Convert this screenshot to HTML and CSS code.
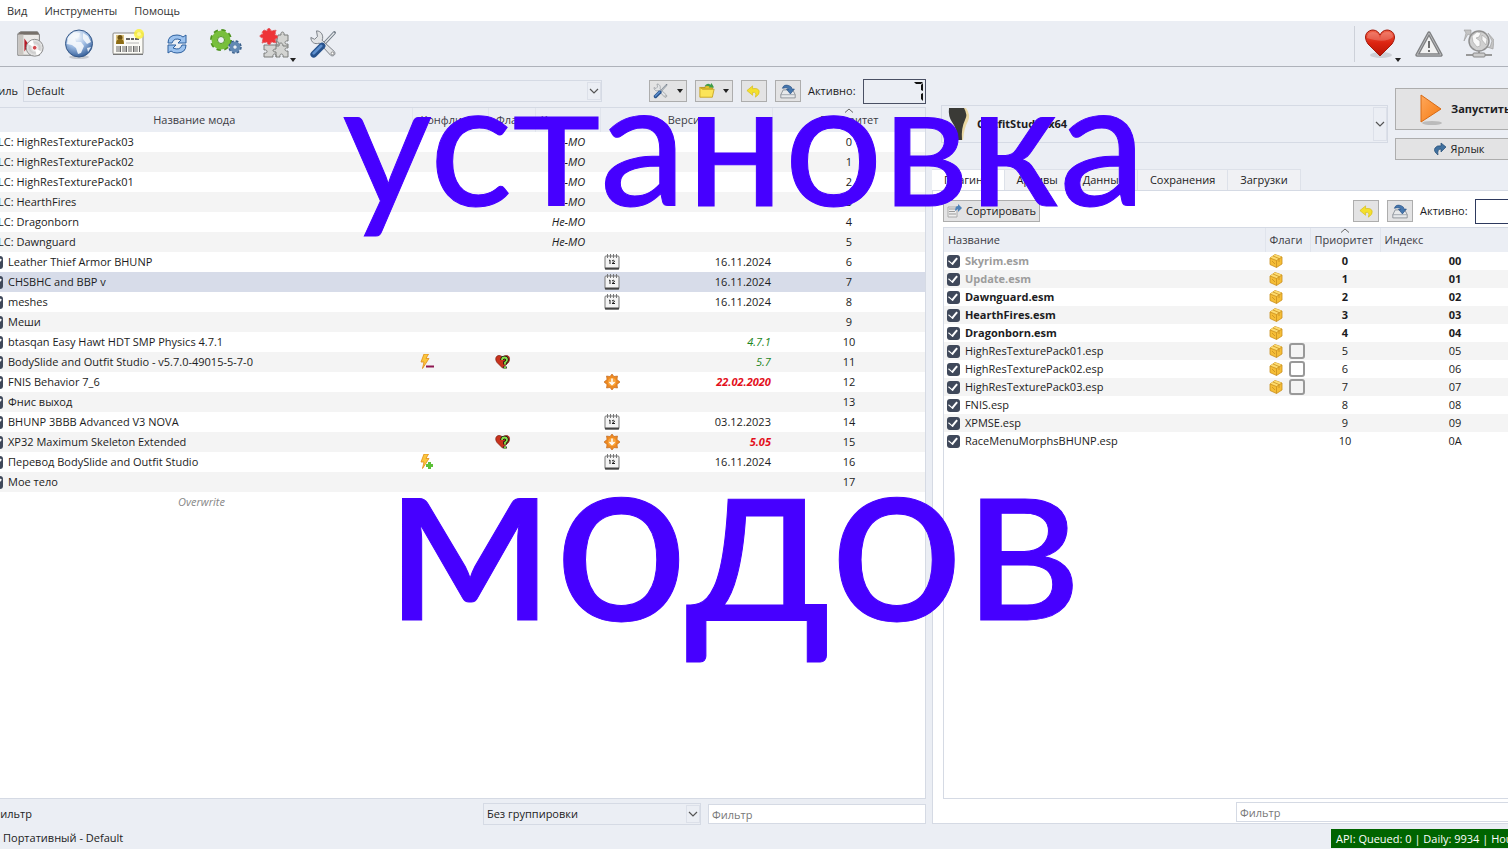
FILE: index.html
```
<!DOCTYPE html>
<html lang="ru">
<head>
  <meta charset="UTF-8">
  <meta name="viewport" content="width=device-width, initial-scale=1.0">
  <title>Mod Organizer</title>
  <link rel="stylesheet" href="styles.css">
</head>
<body>

  <!-- Shared icons -->
  <svg class="sprite" aria-hidden="true">
    <defs>
      <linearGradient id="gHeart" x1="0" y1="0" x2="0" y2="1"><stop offset="0" stop-color="#f0644c"/><stop offset="0.5" stop-color="#dc2410"/><stop offset="1" stop-color="#b81404"/></linearGradient>
      <linearGradient id="gPlay" x1="0" y1="0" x2="1" y2="1"><stop offset="0" stop-color="#ffa85c"/><stop offset="1" stop-color="#f47a10"/></linearGradient>
      <radialGradient id="gGlobe" cx="0.4" cy="0.25" r="0.8"><stop offset="0" stop-color="#fff"/><stop offset="0.5" stop-color="#9dbbe2"/><stop offset="1" stop-color="#2c5793"/></radialGradient>
      <radialGradient id="gDisc"><stop offset="0.1" stop-color="#fff"/><stop offset="0.6" stop-color="#ccc"/><stop offset="1" stop-color="#eee"/></radialGradient>
    </defs>
    <symbol id="calendar" viewBox="0 0 16 16">
      <rect x="1" y="2" width="14" height="13" rx="1" fill="#f4f4f4" stroke="#777"/>
      <path d="M1 14.500h14" stroke="#444" stroke-width="2"/>
      <path d="M3.500 0v4M6.500 0v4M9.500 0v4M12.500 0v4" stroke="#777"/>
      <path d="M5 6.500l1-.5v4M8 7q1.500-1.500 2.500 0q0 1-2.500 2.500h3" fill="none" stroke="#222"/>
    </symbol>
    <symbol id="update" viewBox="0 0 16 16">
      <path d="M8 0l2 2.500 3.500-.5-.5 3.500L16 8l-3 2.500.5 3.500-3.500-.5L8 16l-2-2.500-3.500.5.5-3.500L0 8l3-2.500L2.500 2l3.500.5z" fill="#ee8a22" stroke="#b8601a" stroke-width=".6"/>
      <circle cx="8" cy="8" r="4" fill="#f9a640"/>
      <path d="M8 4.500v6M5.500 8L8 10.500 10.500 8" fill="none" stroke="#fff" stroke-width="1.500"/>
    </symbol>
    <symbol id="endorse" viewBox="0 0 16 16">
      <path d="M7.500 14L2 8.500C-.5 5 1 1.500 4 1.500c2 0 3 1 3.500 2 .5-1 2-2 4-2 3 0 4 3.500 2 7z" fill="#c8321c" stroke="#7d1a0c" stroke-width=".7"/>
      <path d="M7 6q0-2.500 2.500-2.500T12 6q0 1.500-2 2.500v2M10 12.500v2" fill="none" stroke="#111" stroke-width="3.500"/>
      <path d="M7 6q0-2.500 2.500-2.500T12 6q0 1.500-2 2.500v2M10 12.500v2" fill="none" stroke="#8be04a" stroke-width="1.800"/>
    </symbol>
    <symbol id="bolt" viewBox="0 0 16 16">
      <path d="M5 0h4.500L7 4.500h3L3.500 14.500 5 8H2z" fill="#fbc63c" stroke="#e08c18" stroke-width=".8"/>
    </symbol>
    <symbol id="box" viewBox="0 0 14 14">
      <path d="M1 4l5-3.500 7 2.500v7l-5.500 3.500L1 10.500z" fill="#f5bd36" stroke="#c98f20" stroke-width=".8"/>
      <path d="M1 4l6.500 2.500L13 3 6 .5z" fill="#fddc70"/>
      <path d="M7.500 6.500v7M1 4l6.500 2.500L13 3M4 2l6 2.500v3.500M3 7l3 3" fill="none" stroke="#c98f20" stroke-width=".8"/>
    </symbol>
    <symbol id="tools" viewBox="0 0 32 32">
      <path d="M27 4L13 19" stroke="#6d7884" stroke-width="3.500" stroke-linecap="round"/>
      <path d="M27 4L13 19" stroke="#e4e7ea" stroke-width="1.500"/>
      <path d="M8 2l1 6-3 3-4-2c0 5 4 8 9 6l12 13c3 2 6-1 4-4L14 12c2-5-1-10-6-10z" fill="#e2e4e6" stroke="#757b82"/>
      <path d="M14 18L5 27" stroke="#27528c" stroke-width="7" stroke-linecap="round"/>
      <path d="M13 18L5 26" stroke="#5d8fce" stroke-width="3" stroke-linecap="round"/>
      <circle cx="25" cy="26" r="1.500" fill="#fff" stroke="#888"/>
    </symbol>
    <symbol id="undo" viewBox="0 0 16 16">
      <path d="M7 2L1 7l6 5V9q5-1 3 5 5-3 4-6.500T7 5z" fill="#f4e02c" stroke="#d8bf20" stroke-width=".8"/>
    </symbol>
    <symbol id="backup" viewBox="0 0 20 18">
      <path d="M4 7h12l3 6v4H1v-4z" fill="#e7e9eb" stroke="#7d848c"/>
      <path d="M1 13h18" stroke="#9299a2"/>
      <path d="M3 5Q5-1 12 2q3 1 3 4h3l-5 6-5-6h3Q9 3 3 5z" fill="#4677ae" stroke="#254f82" stroke-width=".8"/>
    </symbol>
    <symbol id="chevron" viewBox="0 0 10 6"><path d="M1 1l4 4 4-4" fill="none" stroke="#555" stroke-width="1.200"/></symbol>
    <symbol id="sort" viewBox="0 0 10 5"><path d="M1 4.500L5 1l4 3.500" fill="none" stroke="#666"/></symbol>
    <symbol id="caret" viewBox="0 0 6 4"><path d="M0 0h6L3 4z" fill="#222"/></symbol>
  </svg>

  <!-- Menu -->
  <nav class="menu">
    <a href="#">Вид</a>
    <a href="#">Инструменты</a>
    <a href="#">Помощь</a>
  </nav>

  <!-- Toolbar -->
  <header class="toolbar">
    <button class="tool" aria-label="Установить мод">
      <svg width="30" height="30" viewBox="0 0 32 32"><path d="M6 3h18l2 3v22H3V5z" fill="#eceae8" stroke="#777"/><path d="M3 6l3-3h18l2 3z" fill="#77706a"/><path d="M4 6h5v22H4z" fill="#c9c5c0"/><path d="M10 10v14l5-7z" fill="#b51c28"/><circle cx="21" cy="20" r="9" fill="url(#gDisc)" stroke="#888"/><path d="M21 20l-7-4a8 8 0 0 1 5-4zM21 20l7 4a8 8 0 0 1-5 4z" fill="#fff"/><circle cx="21" cy="20" r="2.500" fill="#d24b50" stroke="#fff"/></svg>
    </button>
    <button class="tool" aria-label="Nexus">
      <svg width="32" height="32" viewBox="0 0 32 32"><ellipse cx="16" cy="29" rx="10" ry="2" fill="#c5c9d0"/><circle cx="16" cy="15.500" r="13.500" fill="url(#gGlobe)" stroke="#345787"/><path d="M5 9l6-5 6 1-1 4-4 1 1 4 5 0 3 4-3 7-3 1-2-6-4-3-5-1zM20 5l5 3 3 6-4 2-4-5zM24 20l4-1-3 5z" fill="#f5f8fc" opacity=".9"/></svg>
    </button>
    <button class="tool" aria-label="Профили">
      <svg width="32" height="32" viewBox="0 0 32 32"><rect x="1" y="5" width="30" height="21" rx="1" fill="#fcfbf6" stroke="#8b8a86"/><path d="M1 26.500h30" stroke="#777"/><rect x="4" y="7" width="8" height="9" fill="#dbc07a"/><circle cx="8" cy="9.500" r="2.500" fill="#6e5210"/><path d="M4 16q0-5 4-5t4 5z" fill="#8c6b14"/><path d="M14 11h4M19 11h3M23 11h4" stroke="#333" stroke-width="1.500"/><path d="M14 15h13" stroke="#b8b8b8"/><path d="M5 18v6M7 18v6M8.500 18v6M11 18v6M13 18v6M14.500 18v6M17 18v6M19 18v6M21.500 18v6M23 18v6M25 18v6M27.500 18v6" stroke="#666"/><circle cx="27" cy="6" r="5" fill="#fbf03a" opacity=".85"/><circle cx="27" cy="6" r="2" fill="#fff89c"/></svg>
    </button>
    <button class="tool" aria-label="Обновить">
      <svg width="22" height="22" viewBox="0 0 22 22"><path d="M2 10q0-8 9-8 4 0 6 2l3-2v8h-8l3-3q-7-3-9 3z" fill="#9cc2ee" stroke="#2d609f"/><path d="M20 12q0 8-9 8-4 0-6-2l-3 2v-8h8l-3 3q7 3 9-3z" fill="#9cc2ee" stroke="#2d609f"/></svg>
    </button>
    <button class="tool" aria-label="Программы">
      <svg width="32" height="32" viewBox="0 0 32 32"><circle cx="11" cy="12" r="9" fill="none" stroke="#4f9420" stroke-width="4" stroke-dasharray="4 3.070"/><circle cx="11" cy="12" r="6.500" fill="none" stroke="#78bf3c" stroke-width="6"/><circle cx="11" cy="12" r="3.500" fill="#ebeef4" stroke="#4f9420"/><circle cx="25" cy="19" r="5.500" fill="none" stroke="#365c88" stroke-width="2.500" stroke-dasharray="2.500 1.820"/><circle cx="25" cy="19" r="3.500" fill="none" stroke="#6288b3" stroke-width="4"/><circle cx="25" cy="19" r="1.500" fill="#ebeef4"/></svg>
    </button>
    <button class="tool" aria-label="Инструменты">
      <svg width="32" height="32" viewBox="0 0 32 32"><path d="M19 7h3c-1-4 4-4 3 0h4v6c-4-1-4 4 0 3v4c-4-1-4 4 0 3v6h-5c1-4-4-4-3 0h-4c1-4-4-4-3 0H5v-4c4 1 4-4 0-3v-5h12z" fill="#d3d4d2" stroke="#7b7d7b"/><path d="M17 8v6c4-1 4 3 0 3v4c-4 0-4 3 0 3v5M17 18h3c0-4 4-4 4 0h5" fill="none" stroke="#7b7d7b"/><path d="M5 2l3 1c0-4 4-3 4 0l5-1-1 5c4 0 3 4 0 4l1 4-5-1c0 4-4 3-4 0l-5 1 1-5c-4 0-4-4 0-4L3 4z" fill="#ee3438" stroke="#e36468" stroke-dasharray="2 1"/></svg>
      <svg class="drop" width="6" height="4"><use href="#caret"/></svg>
    </button>
    <button class="tool" aria-label="Настройки">
      <svg width="30" height="30"><use href="#tools"/></svg>
    </button>
    <span class="spacer"></span>
    <span class="divider"></span>
    <button class="tool" aria-label="Поддержать">
      <svg width="32" height="32" viewBox="0 0 32 32"><ellipse cx="17" cy="27" rx="11" ry="3" fill="#cdd0d6"/><path d="M16 28L4 16C-2 7 4 2 9 2c4 0 6 3 7 5 1-2 3-5 7-5 5 0 11 5 5 14z" fill="url(#gHeart)" stroke="#a31a0c"/><path d="M3 10q0-6 6-6t7 6q1-6 7-6t6 5q-8 7-26 1z" fill="#fff" opacity=".2"/></svg>
      <svg class="drop" width="6" height="4"><use href="#caret"/></svg>
    </button>
    <button class="tool" aria-label="Уведомления">
      <svg width="30" height="30" viewBox="0 0 30 30"><path d="M15 4L27 26H3z" fill="#f1f1f1" stroke="#7f8082" stroke-width="3.500" stroke-linejoin="round"/><path d="M15 4L27 26H3z" fill="none" stroke="#b9babc" stroke-linejoin="round"/><path d="M15 12v7M15 21v2" stroke="#444" stroke-width="1.500"/></svg>
    </button>
    <button class="tool" aria-label="Обновление">
      <svg width="32" height="32" viewBox="0 0 32 32"><path d="M9 2H2l2 3-2 8 4-7 3 2zM26 5l4 8-2 6-3 0 6 2 1-9z" fill="#c4c4c4" stroke="#999" stroke-width=".6"/><circle cx="17" cy="13" r="10" fill="#d0d0d0" stroke="#909090" stroke-width="1.500"/><path d="M10 8l5-4 4 1-2 4-3 1 4 3v5l-3 1-4-5zM20 7l5 4-1 6-4-5z" fill="#f8f8f8" stroke="#a5a5a5" stroke-width=".6"/><path d="M17 23v4M4 27h26" stroke="#999" stroke-width="2"/><rect x="11" y="25" width="12" height="4" rx="1" fill="#ccc" stroke="#888"/></svg>
    </button>
  </header>

  <main class="workspace">

    <!-- Mods -->
    <section class="mods">
      <div class="profile-bar">
        <label class="profile-label" for="profile">Профиль</label>
        <div class="combo profile-combo">
          <select id="profile"><option>Default</option></select>
          <svg class="combo-arrow"><use href="#chevron"/></svg>
        </div>
        <div class="bar-buttons">
          <button class="btn wide" aria-label="Действия"><svg width="16" height="16"><use href="#tools"/></svg><svg width="6" height="4"><use href="#caret"/></svg></button>
          <button class="btn wide" aria-label="Открыть папку">
            <svg width="16" height="16" viewBox="0 0 18 18"><path d="M1 5h6l1-2h7v4H3z" fill="#e2c52c" stroke="#b3911a"/><path d="M1 16V5l3 2h13l-2 9z" fill="#fbe458" stroke="#c8a420"/><path d="M6 4q3-5 7-2l1-2 3 5h-6l1-1q-3-2-6 0z" fill="#3e9c4a"/></svg>
            <svg width="6" height="4"><use href="#caret"/></svg>
          </button>
          <button class="btn" aria-label="Восстановить"><svg width="15" height="15"><use href="#undo"/></svg></button>
          <button class="btn" aria-label="Сохранить"><svg width="16" height="15"><use href="#backup"/></svg></button>
        </div>
        <span class="active-label">Активно:</span>
        <output class="lcd" aria-label="7"><svg width="10" height="20" viewBox="0 0 10 20"><path d="M0 0h9l-2 2H2zM9 1v8L7 8V3zM9 11v8l-2-2v-5z" fill="#111"/></svg></output>
      </div>

      <div class="list">
        <table class="mod-table">
          <colgroup>
            <col class="c-name"><col class="c-conflict"><col class="c-flags"><col class="c-category"><col class="c-version"><col class="c-priority">
          </colgroup>
          <thead>
            <tr><th>Название мода</th><th>Конфликты</th><th>Флаги</th><th>Категория</th><th>Версия</th><th><svg class="sort" width="10" height="5"><use href="#sort"/></svg>Приоритет</th></tr>
          </thead>
          <tbody>
            <tr><td>DLC: HighResTexturePack03</td><td></td><td></td><td class="category">Не-МО</td><td></td><td>0</td></tr>
            <tr><td>DLC: HighResTexturePack02</td><td></td><td></td><td class="category">Не-МО</td><td></td><td>1</td></tr>
            <tr><td>DLC: HighResTexturePack01</td><td></td><td></td><td class="category">Не-МО</td><td></td><td>2</td></tr>
            <tr><td>DLC: HearthFires</td><td></td><td></td><td class="category">Не-МО</td><td></td><td>3</td></tr>
            <tr><td>DLC: Dragonborn</td><td></td><td></td><td class="category">Не-МО</td><td></td><td>4</td></tr>
            <tr><td>DLC: Dawnguard</td><td></td><td></td><td class="category">Не-МО</td><td></td><td>5</td></tr>
            <tr><td><label><input type="checkbox" checked>Leather Thief Armor BHUNP</label></td><td></td><td></td><td></td><td><div class="version"><svg width="16" height="16"><use href="#calendar"/></svg>16.11.2024</div></td><td>6</td></tr>
            <tr class="selected"><td><label><input type="checkbox" checked>CHSBHC and BBP v</label></td><td></td><td></td><td></td><td><div class="version"><svg width="16" height="16"><use href="#calendar"/></svg>16.11.2024</div></td><td>7</td></tr>
            <tr><td><label><input type="checkbox" checked>meshes</label></td><td></td><td></td><td></td><td><div class="version"><svg width="16" height="16"><use href="#calendar"/></svg>16.11.2024</div></td><td>8</td></tr>
            <tr><td><label><input type="checkbox" checked>Меши</label></td><td></td><td></td><td></td><td></td><td>9</td></tr>
            <tr><td><label><input type="checkbox" checked>btasqan Easy Hawt HDT SMP Physics 4.7.1</label></td><td></td><td></td><td></td><td><div class="version current">4.7.1</div></td><td>10</td></tr>
            <tr><td><label><input type="checkbox" checked>BodySlide and Outfit Studio - v5.7.0-49015-5-7-0</label></td><td><svg width="16" height="16" viewBox="0 0 16 16"><use href="#bolt"/><path d="M7 12.500h8" stroke="#8e1650" stroke-width="2"/></svg></td><td><svg width="16" height="16"><use href="#endorse"/></svg></td><td></td><td><div class="version current">5.7</div></td><td>11</td></tr>
            <tr><td><label><input type="checkbox" checked>FNIS Behavior 7_6</label></td><td></td><td></td><td></td><td><div class="version outdated"><svg width="16" height="16"><use href="#update"/></svg>22.02.2020</div></td><td>12</td></tr>
            <tr><td><label><input type="checkbox" checked>Фнис выход</label></td><td></td><td></td><td></td><td></td><td>13</td></tr>
            <tr><td><label><input type="checkbox" checked>BHUNP 3BBB Advanced V3 NOVA</label></td><td></td><td></td><td></td><td><div class="version"><svg width="16" height="16"><use href="#calendar"/></svg>03.12.2023</div></td><td>14</td></tr>
            <tr><td><label><input type="checkbox" checked>XP32 Maximum Skeleton Extended</label></td><td></td><td><svg width="16" height="16"><use href="#endorse"/></svg></td><td></td><td><div class="version outdated"><svg width="16" height="16"><use href="#update"/></svg>5.05</div></td><td>15</td></tr>
            <tr><td><label><input type="checkbox" checked>Перевод BodySlide and Outfit Studio</label></td><td><svg width="16" height="16" viewBox="0 0 16 16"><use href="#bolt"/><path d="M10.500 8v7M7 11.500h7" stroke="#5cc038" stroke-width="3"/></svg></td><td></td><td></td><td><div class="version"><svg width="16" height="16"><use href="#calendar"/></svg>16.11.2024</div></td><td>16</td></tr>
            <tr><td><label><input type="checkbox" checked>Мое тело</label></td><td></td><td></td><td></td><td></td><td>17</td></tr>
            <tr><td class="overwrite">Overwrite</td><td></td><td></td><td></td><td></td><td></td></tr>
          </tbody>
        </table>
      </div>

      <div class="filter-bar">
        <span class="filter-label">Фильтр</span>
        <div class="combo group-combo">
          <select aria-label="Группировка"><option>Без группировки</option></select>
          <svg class="combo-arrow"><use href="#chevron"/></svg>
        </div>
        <input class="filter" type="text" placeholder="Фильтр" aria-label="Фильтр модов">
      </div>
    </section>

    <!-- Executables and plugins -->
    <section class="side">
      <div class="launch">
        <div class="combo exe-combo">
          <svg width="26" height="32" viewBox="0 0 26 32"><path d="M4 0h14q5 7 2 13-4 7-5 19H9q1-10-3-16Q1 8 4 0z" fill="#e9cf80" opacity=".7"/><path d="M1 0h15q4 7 1 12-4 8-3 20H9Q10 22 4 14 0 8 1 0z" fill="#3a3a36"/></svg>
          <select aria-label="Программа"><option>OutfitStudio x64</option></select>
          <svg class="combo-arrow"><use href="#chevron"/></svg>
        </div>
        <div class="launch-buttons">
          <button class="btn run"><svg width="24" height="32" viewBox="0 0 24 32"><ellipse cx="13" cy="30" rx="10" ry="2" fill="#bbb"/><path d="M2 2l20 14L2 29z" fill="url(#gPlay)" stroke="#d86a14" stroke-linejoin="round"/></svg>Запустить</button>
          <button class="btn shortcut"><svg width="12" height="14" viewBox="0 0 12 14"><path d="M7 1l5 4-5 5V7Q3 7 4 13-1 9 1 6t6-2z" fill="#41719f" stroke="#244c74" stroke-width=".7"/></svg>Ярлык</button>
        </div>
      </div>

      <div class="tabs">
        <button class="tab open">Плагины</button>
        <button class="tab">Архивы</button>
        <button class="tab">Данные</button>
        <button class="tab">Сохранения</button>
        <button class="tab">Загрузки</button>
      </div>

      <div class="panel">
        <div class="panel-bar">
          <button class="btn sorter"><svg width="16" height="16" viewBox="0 0 16 16"><path d="M1 4h9v10H1z" fill="#eee" stroke="#aaa"/><path d="M2 6h6M2 8.500h6M2 11h7" stroke="#999"/><path d="M8 8q0-5 3-5V1l4 4-4 4V6z" fill="#4f82b8"/></svg>Сортировать</button>
          <span class="spacer"></span>
          <button class="btn" aria-label="Восстановить"><svg width="15" height="15"><use href="#undo"/></svg></button>
          <button class="btn" aria-label="Сохранить"><svg width="16" height="15"><use href="#backup"/></svg></button>
          <span class="active-label">Активно:</span>
          <output class="lcd"></output>
        </div>

        <div class="list">
          <table class="plugin-table">
            <colgroup><col class="p-name"><col class="p-flags"><col class="p-priority"><col class="p-index"></colgroup>
            <thead>
              <tr><th>Название</th><th>Флаги</th><th><svg class="sort" width="10" height="5"><use href="#sort"/></svg>Приоритет</th><th>Индекс</th></tr>
            </thead>
            <tbody>
              <tr class="master locked"><td><label><input type="checkbox" checked>Skyrim.esm</label></td><td><svg width="14" height="14"><use href="#box"/></svg></td><td>0</td><td>00</td></tr>
              <tr class="master locked"><td><label><input type="checkbox" checked>Update.esm</label></td><td><svg width="14" height="14"><use href="#box"/></svg></td><td>1</td><td>01</td></tr>
              <tr class="master"><td><label><input type="checkbox" checked>Dawnguard.esm</label></td><td><svg width="14" height="14"><use href="#box"/></svg></td><td>2</td><td>02</td></tr>
              <tr class="master"><td><label><input type="checkbox" checked>HearthFires.esm</label></td><td><svg width="14" height="14"><use href="#box"/></svg></td><td>3</td><td>03</td></tr>
              <tr class="master"><td><label><input type="checkbox" checked>Dragonborn.esm</label></td><td><svg width="14" height="14"><use href="#box"/></svg></td><td>4</td><td>04</td></tr>
              <tr><td><label><input type="checkbox" checked>HighResTexturePack01.esp</label></td><td><svg width="14" height="14"><use href="#box"/></svg><i class="page"></i></td><td>5</td><td>05</td></tr>
              <tr><td><label><input type="checkbox" checked>HighResTexturePack02.esp</label></td><td><svg width="14" height="14"><use href="#box"/></svg><i class="page"></i></td><td>6</td><td>06</td></tr>
              <tr><td><label><input type="checkbox" checked>HighResTexturePack03.esp</label></td><td><svg width="14" height="14"><use href="#box"/></svg><i class="page"></i></td><td>7</td><td>07</td></tr>
              <tr><td><label><input type="checkbox" checked>FNIS.esp</label></td><td></td><td>8</td><td>08</td></tr>
              <tr><td><label><input type="checkbox" checked>XPMSE.esp</label></td><td></td><td>9</td><td>09</td></tr>
              <tr><td><label><input type="checkbox" checked>RaceMenuMorphsBHUNP.esp</label></td><td></td><td>10</td><td>0A</td></tr>
            </tbody>
          </table>
        </div>

        <div class="panel-filter">
          <input class="filter" type="text" placeholder="Фильтр" aria-label="Фильтр плагинов">
        </div>
      </div>
    </section>
  </main>

  <footer class="status">
    <span>Портативный - Default</span>
    <span class="api">API: Queued: 0 | Daily: 9934 | Hourly</span>
  </footer>

  <!-- Title over the window -->
  <div class="caption caption-top">установка</div>
  <div class="caption caption-bottom">модов</div>

</body>
</html>
```
FILE: styles.css
```
* {
  box-sizing: border-box;
}

body {
  margin: 0;
  height: 100vh;
  display: flex;
  flex-direction: column;
  position: relative;
  overflow: hidden;
  background-color: #ebeef4;
  color: #1c1c22;
  font-family: "Open Sans", "Noto Sans", sans-serif;
  font-size: 11px;
  line-height: 16px;
}

button,
input,
select {
  font: inherit;
  color: inherit;
}

svg {
  flex: none;
}

.sprite {
  position: absolute;
  width: 0;
  height: 0;
}

.spacer {
  flex: 1;
}

/* Menu and toolbar */
.menu {
  display: flex;
  gap: 17px;
  height: 21px;
  padding: 3px 7px;
  background-color: #fff;
}

.menu a {
  color: #333;
  text-decoration: none;
}

.toolbar {
  display: flex;
  align-items: center;
  height: 46px;
  padding: 0 6px 0 5px;
  border-bottom: 1px solid #aeb2ba;
}

.tool {
  display: flex;
  align-items: center;
  justify-content: center;
  position: relative;
  width: 49px;
  height: 42px;
  padding: 0;
  border: none;
  background: none;
}

.drop {
  position: absolute;
  right: 3px;
  bottom: 3px;
}

.divider {
  width: 1px;
  height: 36px;
  background-color: #cdd1d9;
}

/* Shared controls */
.btn {
  display: flex;
  align-items: center;
  justify-content: center;
  gap: 8px;
  width: 26px;
  height: 22px;
  padding: 0;
  border: 1px solid #adadad;
  background-color: #e3e3e4;
}

.btn.wide {
  width: 38px;
}

.combo {
  display: flex;
  align-items: center;
  position: relative;
  height: 22px;
  border: 1px solid #d5dae4;
}

.combo select {
  flex: 1;
  align-self: stretch;
  min-width: 0;
  padding: 0 3px;
  border: none;
  background: none;
  appearance: none;
}

.combo-arrow {
  position: absolute;
  top: 1px;
  right: 0;
  width: 14px;
  height: calc(100% - 2px);
  padding: 0 1px;
  border: 1px solid #dce0e9;
  pointer-events: none;
}

.lcd {
  display: flex;
  justify-content: flex-end;
  width: 63px;
  height: 25px;
  padding: 2px 1px;
  border: 1px solid #4a5064;
}

.filter {
  height: 20px;
  padding: 0 3px;
  border: 1px solid #d5dae4;
  background-color: #fff;
}

.filter::placeholder {
  color: #777;
}

input[type="checkbox"] {
  appearance: none;
  flex: none;
  width: 13px;
  height: 13px;
  margin: 0 5px 0 0;
  border-radius: 3px;
  background-color: #3f485a;
  display: grid;
  place-items: center;
}

input[type="checkbox"]::before {
  content: "";
  width: 7px;
  height: 4px;
  margin-bottom: 2px;
  border-left: 1px solid #fff;
  border-bottom: 2px solid #fff;
  transform: rotate(-50deg);
}

/* Layout */
.workspace {
  flex: 1;
  min-height: 0;
  display: grid;
  grid-template-columns: 61.8% 1fr;
}

.mods {
  display: flex;
  flex-direction: column;
  min-width: 0;
  min-height: 0;
  margin-left: -25px;
  padding-right: 6px;
}

.profile-bar {
  display: flex;
  align-items: center;
  height: 40px;
  padding-top: 8px;
}

.profile-label {
  width: 43px;
  display: flex;
  justify-content: flex-end;
  margin-right: 5px;
}

.profile-combo {
  flex: 1;
  margin-right: 47px;
}

.bar-buttons {
  display: flex;
  gap: 8px;
}

.active-label {
  width: 55px;
  margin-left: 7px;
}

.list {
  flex: 1;
  min-height: 0;
  overflow: hidden;
  border: 1px solid #d5dae4;
  background-color: #fff;
}

table {
  width: 100%;
  table-layout: fixed;
  border-collapse: collapse;
}

th {
  position: relative;
  height: 24px;
  padding: 0;
  background-color: #ebeef4;
  color: #3c3c44;
  font-weight: normal;
  white-space: nowrap;
  overflow: hidden;
}

th + th {
  border-left: 1px solid #e0e4ec;
}

.sort {
  position: absolute;
  top: 0;
  left: 50%;
  margin-left: -5px;
}

td {
  padding: 0;
  white-space: nowrap;
}

td svg {
  display: block;
}

td label {
  display: flex;
  align-items: center;
}

tbody tr:nth-child(even) {
  background-color: #f4f4f4;
}

/* Mod list */
.mod-table td {
  height: 20px;
}

.mod-table tbody tr.selected {
  background-color: #d7dce9;
}

.c-conflict {
  width: 76px;
}

.c-flags {
  width: 47px;
}

.c-category {
  width: 65px;
}

.c-version {
  width: 172px;
}

.c-priority {
  width: 152px;
}

.mod-table td:first-child {
  padding-left: 14px;
}

.mod-table td:nth-child(2),
.mod-table td:nth-child(3) {
  padding-left: 6px;
}

.mod-table td:last-child {
  text-align: center;
}

.mod-table .category {
  text-align: center;
  font-style: italic;
}

.version {
  display: flex;
  align-items: center;
  justify-content: flex-end;
  padding: 0 2px 0 3px;
}

.version svg {
  margin-right: auto;
}

.version.current {
  color: #1d861d;
  font-style: italic;
}

.version.outdated {
  color: #e3101c;
  font-style: italic;
  font-weight: bold;
}

.mod-table .overwrite {
  text-align: center;
  font-style: italic;
  color: #888;
}

.filter-bar {
  display: flex;
  align-items: center;
  height: 28px;
  padding-top: 2px;
}

.filter-label {
  width: 57px;
  display: flex;
  justify-content: flex-end;
}

.filter-bar .group-combo {
  width: 218px;
  margin: 0 7px 0 auto;
}

.filter-bar .filter {
  width: 218px;
}

/* Right side, runs past the window edge */
.side {
  display: flex;
  flex-direction: column;
  min-width: 0;
  min-height: 0;
  margin-right: -24px;
}

.launch {
  display: flex;
  align-items: center;
  gap: 7px;
  height: 102px;
  padding: 12px 8px 0 9px;
}

.exe-combo {
  flex: 1;
  height: 38px;
  padding-left: 6px;
  font-weight: bold;
}

.launch-buttons {
  display: flex;
  flex-direction: column;
  gap: 8px;
  width: 129px;
}

.launch-buttons .btn {
  width: 100%;
}

.launch-buttons .run {
  justify-content: flex-start;
  height: 42px;
  padding-left: 23px;
  font-weight: bold;
}

.launch-buttons .shortcut {
  gap: 4px;
}

.tabs {
  display: flex;
  height: 21px;
}

.tab {
  padding: 0 12px;
  border: 1px solid #dde1e9;
  border-left: none;
  border-bottom: none;
  background-color: #f0f1f4;
}

.tab.open {
  background-color: #fff;
}

.panel {
  flex: 1;
  min-height: 0;
  display: flex;
  flex-direction: column;
  margin-bottom: 3px;
  padding-left: 10px;
  border: 1px solid #d5dae4;
  background-color: #fff;
}

.panel-bar {
  display: flex;
  align-items: center;
  gap: 8px;
  height: 36px;
  padding-top: 4px;
}

.panel-bar .sorter {
  width: 97px;
  gap: 3px;
}

.panel-bar .active-label {
  width: 47px;
  margin-left: -1px;
}

.panel-bar .lcd {
  width: 56px;
  border-color: #2e3a5e;
}

.p-flags {
  width: 45px;
}

.p-priority {
  width: 70px;
}

.p-index {
  width: 150px;
}

.plugin-table th {
  padding-left: 4px;
  text-align: left;
}

.plugin-table td {
  height: 18px;
  text-align: center;
}

.plugin-table td:first-child {
  padding-left: 3px;
}

.plugin-table td:nth-child(2) svg,
.page {
  display: inline-block;
  vertical-align: middle;
}

.plugin-table td:nth-child(2) {
  padding-left: 4px;
  text-align: left;
  line-height: 0;
}

.page {
  width: 16px;
  height: 16px;
  margin-left: 6px;
  border: 2px solid #999;
  border-radius: 3px;
}

.master {
  font-weight: bold;
}

.locked label {
  color: #9c9c9c;
}

.panel-filter {
  display: flex;
  justify-content: flex-end;
  height: 24px;
  padding-top: 3px;
}

.panel-filter .filter {
  width: 295px;
}

/* Status bar */
.status {
  display: flex;
  align-items: center;
  justify-content: space-between;
  height: 22px;
  padding-left: 3px;
}

.api {
  width: 177px;
  height: 19px;
  padding: 2px 5px;
  overflow: hidden;
  white-space: nowrap;
  background-color: #006400;
  color: #fff;
}

/* Title */
.caption {
  position: absolute;
  left: 0;
  text-align: center;
  color: #4600ff;
  font-family: Lato, "Open Sans", sans-serif;
  line-height: 1;
  -webkit-text-stroke: 1px #4600ff;
  pointer-events: none;
}

.caption-top {
  top: 52px;
  right: 20px;
  font-size: 174px;
}

.caption-bottom {
  top: 409px;
  right: 40px;
  font-size: 238px;
}
```
